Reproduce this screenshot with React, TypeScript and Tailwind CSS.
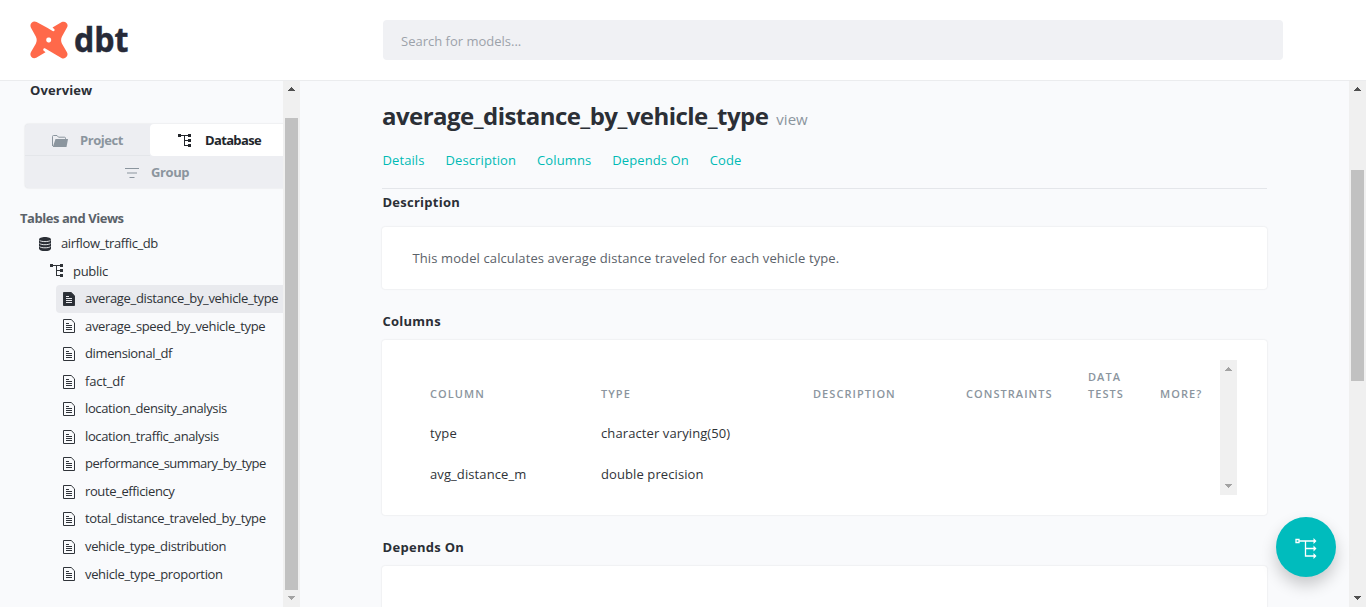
import React from "react";

const models = [
  { name: "average_distance_by_vehicle_type", tracking: "tracking-[-0.34px]" },
  { name: "average_speed_by_vehicle_type", tracking: "tracking-[-0.34px]" },
  { name: "dimensional_df", tracking: "tracking-[-0.38px]" },
  { name: "fact_df", tracking: "tracking-[-0.2px]" },
  { name: "location_density_analysis", tracking: "tracking-[-0.38px]" },
  { name: "location_traffic_analysis", tracking: "tracking-[-0.37px]" },
  { name: "performance_summary_by_type", tracking: "tracking-[-0.49px]" },
  { name: "route_efficiency", tracking: "tracking-[-0.38px]" },
  { name: "total_distance_traveled_by_type", tracking: "tracking-[-0.35px]" },
  { name: "vehicle_type_distribution", tracking: "tracking-[-0.35px]" },
  { name: "vehicle_type_proportion", tracking: "tracking-[-0.34px]" },
];

const links = ["Details", "Description", "Columns", "Depends On", "Code"];

function TreeIcon({ className = "" }: { className?: string }) {
  return (
    <svg viewBox="0 0 14 14" className={"h-3.5 w-3.5 shrink-0 " + className} fill="currentColor" shapeRendering="crispEdges">
      <path d="M0 0h3v3H0zM10 0h3v3h-3zM10 5h3v3h-3zM10 10h3v3h-3zM3 1h7v1H3zM6 1h1v11H6zM6 6h4v1H6zM6 11h4v1H6z" />
    </svg>
  );
}

function DocIcon({ filled }: { filled?: boolean }) {
  const line = filled ? "#e9eaee" : "#30343a";
  return (
    <svg viewBox="0 0 12 14" className="h-3.5 w-3 shrink-0" fill="none">
      <path d="M.5.5h7.7l3.3 3.3v9.7H.5z" fill={filled ? "#2b2f36" : "none"} stroke="#30343a" />
      <path d="M3 4.5h3M3 6.5h6M3 8.5h6M3 10.5h6" stroke={line} />
    </svg>
  );
}

function DatabaseIcon() {
  return (
    <svg viewBox="0 0 12 14" className="h-3.5 w-3 shrink-0" fill="none">
      <path d="M0 2.6C0 1 2.7 0 6 0s6 1 6 2.6v8.8C12 13 9.300 14 6 14s-6-1-6-2.600z" fill="#2b2f36" />
      <path d="M.6 3.400C2 5 10 5 11.400 3.400M.6 6.500C2 8.100 10 8.100 11.400 6.500M.6 9.600c1.400 1.600 9.400 1.600 10.800 0" stroke="#f8fafc" strokeWidth=".9" />
    </svg>
  );
}

type ScrollbarProps = { spacer: string; thumb: string; inner?: boolean; atEnd?: boolean };

function Scrollbar({ spacer, thumb, inner, atEnd }: ScrollbarProps) {
  return (
    <div className="flex w-[17px] shrink-0 flex-col bg-[#f0f0f0]">
      <svg
        viewBox={inner ? "0 0 17 17" : "0 1 17 16"}
        className={inner ? "h-[17px] w-[17px] shrink-0" : "h-4 w-[17px] shrink-0"}
        fill={inner ? "#a3a3a3" : "#505050"}
        shapeRendering="crispEdges"
      >
        <path d="M8 7h1v1h1v1h1v1h1v1H5v-1h1V9h1V8h1z" />
      </svg>
      <div className="flex min-h-0 flex-1 flex-col items-center">
        <div className={"shrink-0 " + spacer} />
        <div className={"w-[13px] shrink-0 bg-[#c1c1c1] " + thumb} />
      </div>
      <svg viewBox="0 0 17 17" className="h-[17px] w-[17px] shrink-0" fill={inner || atEnd ? "#a3a3a3" : "#505050"} shapeRendering="crispEdges">
        <path d="M5 6h7v1h-1v1h-1v1H9v1H8V9H7V8H6V7H5z" />
      </svg>
    </div>
  );
}

function Logo() {
  return (
    <div className="flex w-[110px] shrink-0 items-center gap-[7px]">
      <svg viewBox="0 0 38 38" className="h-[38px] w-[38px]">
        <path
          fill="#ff694a"
          d="M6.600.9 17.200 6.800 22.600 10c1.500.7 2.500-.6 1.800-1.800l-1.900-1.800 9.300-5.300C35.700-.5 39.300 3.600 36.700 7L32 15.400c-1.200 2.500-1.200 5 0 7.300l4.800 8.300c2.400 3.700-1.600 7.900-5.400 5.900L15.300 27.500c-1.600-.7-2.500.8-1.800 2l2 1.700-9.300 5.600C2.500 38.600-1.100 34.700 1 31l4.800-8.300c1.200-2.400 1.200-4.800 0-7.300L1.100 7C-1.200 3 2.900-1.100 6.600.9z"
        />
        <rect x="16.300" y="16.600" width="4.800" height="4.800" rx="1.800" fill="#fff" />
      </svg>
      <svg viewBox="0 0 55 28" className="h-7 w-[55px] overflow-visible" fill="#262a38">
        <text
          x="-1"
          y="26.400"
          fontSize="34"
          textLength="54.500"
          lengthAdjust="spacingAndGlyphs"
          stroke="#262a38"
          strokeWidth=".5"
          className="font-['Open_Sans','Noto_Sans',sans-serif] font-bold"
        >
          dbt
        </text>
      </svg>
    </div>
  );
}

function Sidebar() {
  return (
    <aside className="flex w-[300px] shrink-0">
      <div className="w-[283px] overflow-hidden whitespace-nowrap">
        <div className="ml-[30px] h-[43px] text-[13px] leading-[19px] font-bold tracking-[0.1px]">Overview</div>
        <div className="ml-[25px] h-16 w-[290px] overflow-hidden rounded-l-[4px] bg-[#edeef2] text-[13px] font-bold text-[#8b959e] shadow-[0_0_2px_rgba(0,0,0,0.14)]">
          <div className="flex h-8">
            <div className="flex w-[125px] items-center border-b border-[#e4e6ea] pt-0.5 pl-[27px] tracking-[-0.45px]">
              <svg viewBox="0 0 16 12" className="mr-3 h-3 w-4" fill="currentColor">
                <path d="M.5 11V1.500Q.5.500 1.500.5h3.500l1.500 1.700h6q1 0 1 1V4" fill="none" stroke="currentColor" />
                <path d="M3.500 4H16l-1.500 8H.8z" />
              </svg>
              Project
            </div>
            <div className="flex flex-1 items-center rounded-l-[4px] bg-white pt-0.5 pl-7 tracking-[-0.65px] text-[#22262b]">
              <TreeIcon className="mr-[13px]" />
              Database
            </div>
          </div>
          <div className="flex h-8 items-center pt-0.5 pl-[100px] tracking-[-0.4px]">
            <svg viewBox="0 0 14 10" className="mr-3 h-2.5 w-3.5" stroke="currentColor">
              <path d="M0 .5h14M2 5h10M4.500 9.500h5" />
            </svg>
            Group
          </div>
        </div>
        <div className="mt-[21px] ml-5 h-[21px] text-[13px] leading-[19px] font-bold tracking-[-0.45px] text-[#5b6269]">Tables and Views</div>
        <div className="text-[13px] text-[#2f3338]">
          <div className="flex h-[27.550px] items-center gap-2.5 pl-[39px] tracking-[-0.4px]"><DatabaseIcon />airflow_traffic_db</div>
          <div className="flex h-[27.550px] items-center gap-[9px] pl-[50px] tracking-[-0.3px]"><TreeIcon />public</div>
          {models.map((m, i) => (
            <div
              key={m.name}
              className={"ml-14 flex h-[27.550px] items-center gap-2.5 rounded-l-[4px] pl-[7px] " + m.tracking + (i === 0 ? " bg-[#e9eaee]" : "")}
            >
              <DocIcon filled={i === 0} />
              {m.name}
            </div>
          ))}
        </div>
      </div>
      <Scrollbar spacer="h-[21px]" thumb="h-[472px]" atEnd />
    </aside>
  );
}

function ColumnsCard() {
  const grid = "grid grid-cols-[171px_212px_153px_122px_72px_60px] pl-[18px]";
  return (
    <section className="flex h-[175px] rounded-[3px] bg-white px-[30px] py-5 shadow-[0_0_2px_rgba(0,0,0,0.12)]">
      <div className="flex-1 text-[13px] tracking-[0.1px] text-[#2f3338]">
        <div className={grid + " h-[53px] items-end pb-[11px] text-[11px] leading-[17px] font-semibold tracking-[1.050px] text-[#8b959e]"}>
          <span>COLUMN</span>
          <span>TYPE</span>
          <span>DESCRIPTION</span>
          <span>CONSTRAINTS</span>
          <span>DATA<br />TESTS</span>
          <span>MORE?</span>
        </div>
        <div className={grid + " h-[41px] items-center"}><span>type</span><span>character varying(50)</span></div>
        <div className={grid + " h-[41px] items-center"}><span>avg_distance_m</span><span>double precision</span></div>
      </div>
      <Scrollbar spacer="h-0" thumb="h-0" inner />
    </section>
  );
}

export default function App() {
  return (
    <div className="relative flex h-[607px] w-[1366px] flex-col overflow-hidden bg-[#f9fafc] font-['Open_Sans','Noto_Sans',sans-serif] text-[#2b2f36]">
      <header className="flex h-[81px] shrink-0 items-center border-b border-[#ebecee] bg-white pl-[30px]">
        <Logo />
        <div className="ml-[243px] flex h-10 w-[900px] items-center rounded-[4px] bg-[#f0f1f4] pt-[3px] pl-[18px] text-[13px] text-[#9ca2aa]">
          Search for models...
        </div>
      </header>
      <div className="flex min-h-0 flex-1">
        <Sidebar />
        <main className="min-w-0 flex-1 overflow-hidden px-[82px]">
          <h1 className="flex h-[72px] items-baseline gap-2 pt-[18px] text-[24px] leading-[34px] font-bold">
            <span className="tracking-[-0.54px]">average_distance_by_vehicle_type</span>
            <span className="text-[15px] font-normal text-[#8b959e]">view</span>
          </h1>
          <nav className="flex h-9 gap-[21px] border-b border-[#e4e6ea] pl-[0.500px] text-[13px] leading-[14px] tracking-[0.1px] text-[#00bab5]">
            {links.map((l) => <a key={l}>{l}</a>)}
          </nav>
          <h2 className="h-[38px] pt-1 pl-[0.500px] text-[13px] leading-[19px] font-bold tracking-[0.25px]">Description</h2>
          <section className="flex h-[62px] items-center rounded-[3px] bg-white pt-0.5 pl-[30.500px] text-[13px] tracking-[0.11px] text-[#5b6269] shadow-[0_0_2px_rgba(0,0,0,0.12)]">
            This model calculates average distance traveled for each vehicle type.
          </section>
          <h2 className="h-[51px] pt-[23px] pl-[0.500px] text-[13px] leading-[19px] font-bold tracking-[0.25px]">Columns</h2>
          <ColumnsCard />
          <h2 className="h-[51px] pt-[23px] pl-[0.500px] text-[13px] leading-[19px] font-bold tracking-[0.3px]">Depends On</h2>
          <section className="h-[100px] rounded-[3px] bg-white shadow-[0_0_2px_rgba(0,0,0,0.12)]" />
        </main>
        <Scrollbar spacer="h-[73px]" thumb="h-[211px]" />
      </div>
      <button className="absolute top-[517px] left-[1276px] flex h-[60px] w-[60px] items-center justify-center rounded-full bg-[#00bcbd] pt-[3px] shadow-[0_8px_16px_rgba(0,0,0,0.2)]">
        <svg viewBox="0 0 22 22" className="h-[22px] w-[22px]" fill="none" stroke="#fff">
          <path d="M1 1.500h3v3H1zM4.500 3H19M10.500 3v15H19M10.500 10.500H19" strokeWidth="1.300" />
          <path d="M18.500 0v6l3-3zM18.500 7.500v6l3-3zM18.500 15v6l3-3z" fill="#fff" stroke="none" />
        </svg>
      </button>
    </div>
  );
}
